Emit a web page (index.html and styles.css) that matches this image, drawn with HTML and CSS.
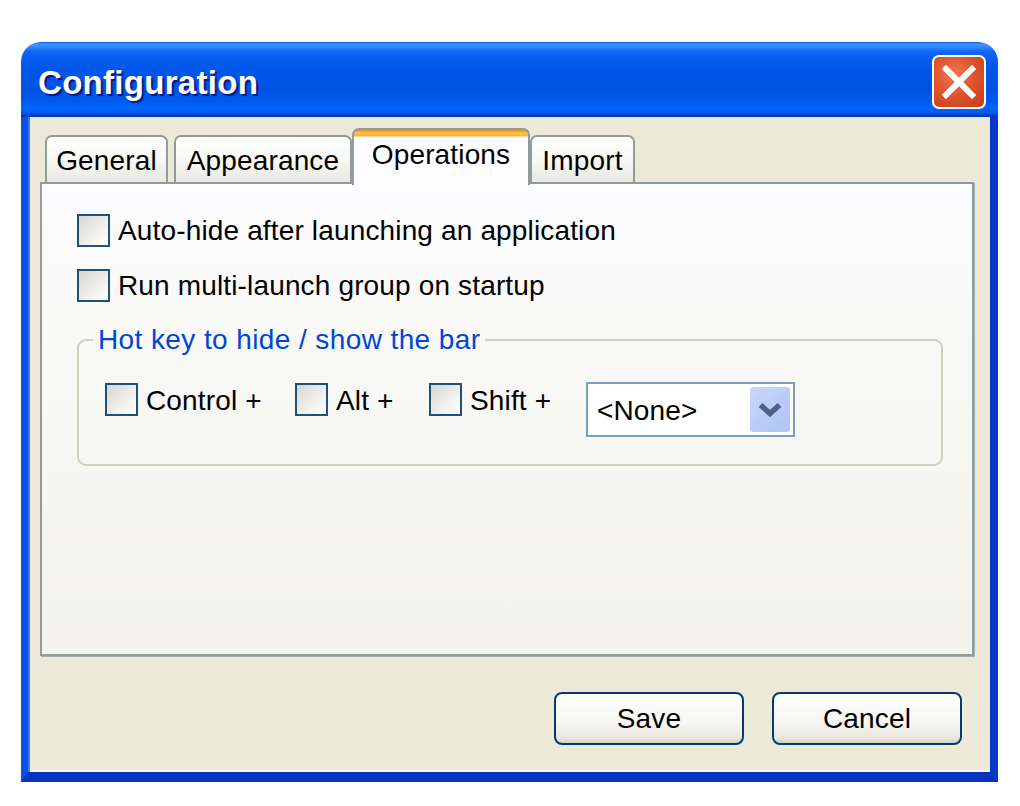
FILE: index.html
```html
<!DOCTYPE html>
<html lang="en">
<head>
<meta charset="utf-8">
<title>Configuration</title>
<link rel="stylesheet" href="styles.css">
</head>
<body>
<div class="window">
  <div class="titlebar">
    <div class="title">Configuration</div>
    <div class="close">
      <svg viewBox="0 0 34 34" width="34" height="34"><path d="M4 4 L30 30 M30 4 L4 30" stroke="#fff" stroke-width="6" stroke-linecap="square" fill="none"/></svg>
    </div>
  </div>
  <div class="client">
    <div class="tabs">
      <div class="tab tab-general">General</div>
      <div class="tab tab-appearance">Appearance</div>
      <div class="tab tab-operations active">Operations</div>
      <div class="tab tab-import">Import</div>
    </div>
    <div class="panel">
      <label class="row"><span class="cb"></span><span>Auto-hide after launching an application</span></label>
      <label class="row"><span class="cb"></span><span>Run multi-launch group on startup</span></label>
      <fieldset class="group">
        <legend class="legend">Hot key to hide / show the bar</legend>
        <div class="hotrow">
          <label class="hk hk-control"><span class="cb"></span><span>Control +</span></label>
          <label class="hk hk-alt"><span class="cb"></span><span>Alt +</span></label>
          <label class="hk hk-shift"><span class="cb"></span><span>Shift +</span></label>
          <div class="combo">
            <span class="combo-text">&lt;None&gt;</span>
            <span class="combo-btn">
              <svg viewBox="0 0 24 15" width="24" height="15"><path d="M2.5 3 L12 11.5 L21.5 3" stroke="#4D6185" stroke-width="5.5" fill="none"/></svg>
            </span>
          </div>
        </div>
      </fieldset>
    </div>
    <div class="buttons">
      <div class="btn">Save</div>
      <div class="btn">Cancel</div>
    </div>
  </div>
</div>
</body>
</html>
```
FILE: styles.css
```css
html, body {
  margin: 0;
  padding: 0;
  background: #ffffff;
}
body {
  font-family: "Liberation Sans", Arial, sans-serif;
  font-size: 28px;
  letter-spacing: 0.15px;
  color: #000;
}
.window {
  margin: 42px 0 0 21px;
  width: 977px;
  height: 740px;
  display: flex;
  flex-direction: column;
}
.titlebar {
  height: 75px;
  flex: none;
  border-radius: 20px 20px 0 0;
  background: linear-gradient(to bottom,
    #0A5AE0 0px, #3D95FF 2px, #3088FC 5px, #0E63F2 10px,
    #0057EA 25px, #0052E2 48px, #005AF2 60px, #0066FF 66px,
    #005CF4 70px, #0044D0 73px, #0030A8 75px);
  display: flex;
  align-items: center;
  justify-content: space-between;
  padding: 0 12px 0 17px;
  box-sizing: border-box;
}
.title {
  font-family: "Liberation Sans", Arial, sans-serif;
  font-weight: bold;
  font-size: 33px;
  letter-spacing: 0.3px;
  color: #fff;
  text-shadow: 2px 2px 1px #0A1883;
  margin-top: 6px;
}
.close {
  width: 54px;
  height: 54px;
  box-sizing: border-box;
  border: 2.5px solid #fff;
  border-radius: 7px;
  background: radial-gradient(circle at 40% 35%, #EC7A55 0%, #E0552E 45%, #C63C16 100%);
  display: flex;
  align-items: center;
  justify-content: center;
  margin-top: 5px;
}
.client {
  flex: 1;
  background: #ECE9D8;
  border-left: 7px solid #0B50E6;
  border-right: 8px solid #0838C8;
  border-bottom: 10px solid #0833C2;
  box-shadow: inset 2px 0 0 #2E7CF6, inset 0 -2px 0 #F8F4E2;
  display: flex;
  flex-direction: column;
  padding-top: 11px;
}
.tabs {
  display: flex;
  align-items: flex-end;
  padding-left: 17px;
  height: 54px;
  position: relative;
  z-index: 2;
}
.tab {
  height: 47px;
  box-sizing: border-box;
  border: 2px solid #919B9C;
  border-bottom: none;
  border-radius: 7px 7px 0 0;
  background: linear-gradient(to bottom, #FFFFFF 0%, #F6F6F2 55%, #E9E8E1 100%);
  display: flex;
  align-items: center;
  justify-content: center;
  padding-top: 2px;
}
.tab-general { width: 123px; margin-right: 6px; }
.tab-appearance { width: 178px; margin-right: 0; }
.tab-operations { width: 178px; }
.tab-import { width: 105px; }
.tab.active {
  height: 57px;
  margin-bottom: -3px;
  border-color: #919B9C;
  background: linear-gradient(to bottom, #E68B2C 0px, #FFC73C 3px, #F8B03A 6px, #FCFCFE 7px, #FCFCFE 100%);
  padding-top: 0;
  padding-bottom: 6px;
}
.panel {
  margin-left: 12px;
  width: 934px;
  height: 474px;
  box-sizing: border-box;
  border: 2px solid #919B9C;
  box-shadow: 1px 1px 0 #A7ADAD;
  background: linear-gradient(to bottom, #FCFCFE 0%, #F7F7F4 50%, #F3F2EC 100%);
  padding: 29px 29px 0 35px;
  display: flex;
  flex-direction: column;
}
.row {
  display: flex;
  align-items: center;
  gap: 8px;
  height: 32px;
  margin-bottom: 22px;
  padding-top: 1px;
}
.row > span:last-child {
  padding-top: 2px;
}
.cb {
  width: 33px;
  height: 33px;
  flex: none;
  box-sizing: border-box;
  border: 2.5px solid #1C5180;
  background: linear-gradient(135deg, #D6D5CE 0%, #EDEDE8 50%, #FFFFFF 100%);
}
.group {
  margin: 1px 0 0 0;
  padding: 26px 0 27px 0;
  border: 2px solid #D0D0BF;
  border-radius: 9px;
  min-width: 0;
}
.legend {
  color: #0046D5;
  padding: 0 5px;
  margin-left: 14px;
  line-height: 32px;
  letter-spacing: 0.4px;
}
.hotrow {
  display: flex;
  align-items: flex-start;
  padding-left: 26px;
}
.hk {
  display: flex;
  align-items: center;
  gap: 8px;
  height: 34px;
}
.hk > span:last-child {
  padding-top: 3px;
}
.hk-control { width: 190px; }
.hk-alt { width: 134px; }
.hk-shift { width: 157px; }
.combo {
  width: 209px;
  height: 55px;
  box-sizing: border-box;
  border: 2px solid #7F9DB9;
  background: #fff;
  display: flex;
  align-items: center;
  justify-content: space-between;
  padding: 3px 3px 3px 9px;
}
.combo-text {
  padding-top: 2px;
}
.combo-btn {
  width: 40px;
  height: 45px;
  border-radius: 3px;
  background: linear-gradient(135deg, #C9D8FC 0%, #BACDF9 50%, #AFC4F6 100%);
  display: flex;
  align-items: center;
  justify-content: center;
}
.buttons {
  display: flex;
  justify-content: flex-end;
  gap: 28px;
  padding-right: 28px;
  margin-top: 36px;
}
.btn {
  width: 190px;
  height: 53px;
  box-sizing: border-box;
  border: 2.5px solid #003C74;
  border-radius: 8px;
  background: linear-gradient(to bottom, #FFFFFF 0%, #F5F5F1 60%, #E8E6DE 90%, #D6D0C5 100%);
  display: flex;
  align-items: center;
  justify-content: center;
}
```
